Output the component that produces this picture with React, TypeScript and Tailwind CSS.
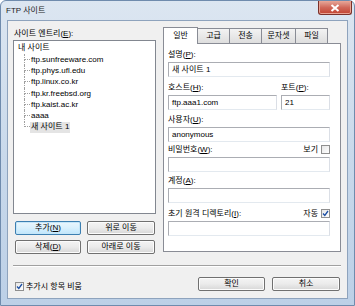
import React from 'react';

const U = ({ children }: { children: React.ReactNode }) => <span className="underline">{children}</span>;

const Btn = ({ children, def, className }: { children: React.ReactNode; def?: boolean; className?: string }) => (
    <div
        className={`h-[14px] flex items-center justify-center rounded-[2px] border text-[8px] leading-none ${
            def
                ? 'border-[#3c7fb1] bg-linear-to-b from-[#eaf6fd] via-[#d9f0fc] to-[#bee6fd] shadow-[inset_0_0_0_1px_#c5e6f8]'
                : 'border-[#707070] bg-linear-to-b from-[#f4f4f4] via-[#ebebeb] to-[#d6d6d6] shadow-[inset_0_0_0_1px_#fcfcfc]'
        } ${className ?? ''}`}
    >
        {children}
    </div>
);

const Check = ({ checked }: { checked?: boolean }) => (
    <span className="w-[9px] h-[9px] border border-[#8f8f8f] bg-linear-to-br from-[#e6e6e6] to-white flex items-center justify-center">
        {checked && (
            <svg width="7" height="7" viewBox="0 0 7 7">
                <path d="M1 3.5 L2.8 5.5 L6 1" stroke="#1c4fa4" strokeWidth="1.3" fill="none" />
            </svg>
        )}
    </span>
);

const Field = ({ value, className }: { value?: string; className?: string }) => (
    <div className={`h-[15px] border border-[#abadb3] border-b-[#e3e9ef] border-r-[#dbdfe6] bg-white px-[3px] flex items-center text-[8px] ${className ?? ''}`}>
        {value}
    </div>
);

const sites = [
    'ftp.sunfreeware.com',
    'ftp.phys.ufl.edu',
    'ftp.linux.co.kr',
    'ftp.kr.freebsd.org',
    'ftp.kaist.ac.kr',
    'aaaa',
    '새 사이트 1',
];

const App = () => {
    return (
        <div className="w-[355px] h-[306px] font-['Liberation_Sans','Noto_Sans_CJK_KR',sans-serif] text-black text-[8px]">
            <div className="w-full h-full flex flex-col rounded-t-[6px] border border-[#6f8bad] bg-linear-to-b from-[#dce6f1] via-[#c9d9eb] to-[#bcd0e7]">
                {/* title bar */}
                <div className="h-[19px] flex items-start shrink-0">
                    <span className="ml-[5px] mt-[4px] text-[8px] text-[#1b1b1b]">FTP 사이트</span>
                    <div className="ml-auto mr-[2px] w-[34px] h-[14px] rounded-b-[3px] border border-t-0 border-[#7a3029] bg-linear-to-b from-[#e5a89b] via-[#d0685a] to-[#c2422f] flex items-center justify-center shadow-[inset_0_0_0_1px_#e9a292]">
                        <svg width="10" height="8" viewBox="0 0 10 8">
                            <path d="M1.5 1 L8.5 7 M8.5 1 L1.5 7" stroke="#fff" strokeWidth="2" />
                        </svg>
                    </div>
                </div>

                {/* client area */}
                <div className="mx-[6px] h-[279px] border border-[#8ea3bd] bg-[#f0f0f0] flex flex-col pt-[6px] pl-[5px] pr-[6px]">
                    <div className="flex gap-[7px] h-[227px]">
                        {/* left column */}
                        <div className="w-[143px] flex flex-col">
                            <div className="h-[13px] flex items-center pl-[1px]">
                                사이트 엔트리(<U>E</U>):
                            </div>
                            <div className="h-[174px] border border-[#828790] bg-white pl-[4px] pt-[1px]">
                                <div className="h-[12px] flex items-center">내 사이트</div>
                                {sites.map((s, i) => {
                                    const last = i === sites.length - 1;
                                    return (
                                        <div key={s} className="h-[11.3px] flex ml-[6px]">
                                            <div className="w-[6px] flex flex-col">
                                                <div className="h-1/2 border-l border-b border-dotted border-[#a0a0a0]" />
                                                <div className={`h-1/2 ${last ? '' : 'border-l border-dotted border-[#a0a0a0]'}`} />
                                            </div>
                                            <span
                                                className={`flex items-center px-[1px] ${last ? 'bg-[#e4e4e4]' : ''}`}
                                            >
                                                {s}
                                            </span>
                                        </div>
                                    );
                                })}
                            </div>
                            <div className="mt-[7px] pl-[2px] pr-[1px] grid grid-cols-[66px_68px] gap-x-[6px] gap-y-[5px]">
                                <Btn def>추가(<U>N</U>)</Btn>
                                <Btn>위로 이동</Btn>
                                <Btn>삭제(<U>D</U>)</Btn>
                                <Btn>아래로 이동</Btn>
                            </div>
                        </div>

                        {/* right column */}
                        <div className="w-[178px] flex flex-col">
                            <div className="h-[16px] flex items-end">
                                <div className="relative z-10 -mb-[1px] w-[35px] h-[17px] border border-b-0 border-[#898c95] bg-white flex items-center justify-center">
                                    일반
                                </div>
                                {['고급', '전송', '문자셋', '파일'].map((t, i) => (
                                    <div
                                        key={t}
                                        className={`${i === 2 ? 'w-[35px]' : 'w-[33px]'} ${i === 0 ? '-ml-[1px]' : '-ml-[1px]'} h-[15px] border border-b-0 border-[#898c95] bg-linear-to-b from-[#f3f3f3] to-[#dedede] flex items-center justify-center`}
                                    >
                                        {t}
                                    </div>
                                ))}
                            </div>
                            <div className="h-[209px] border border-[#898c95] bg-white pt-[3px] pl-[4px] pr-[10px] flex flex-col">
                                <div className="h-[15px] flex items-center">설명(<U>P</U>):</div>
                                <Field value="새 사이트 1" />

                                <div className="mt-[3px] h-[15px] flex items-center">
                                    <span className="w-[113px]">호스트(<U>H</U>):</span>
                                    <span>포트(<U>P</U>):</span>
                                </div>
                                <div className="flex gap-[4px]">
                                    <Field value="ftp.aaa1.com" className="w-[109px]" />
                                    <Field value="21" className="flex-1" />
                                </div>

                                <div className="mt-[2px] h-[15px] flex items-center">사용자(<U>U</U>):</div>
                                <Field value="anonymous" />

                                <div className="h-[15px] flex items-center justify-between">
                                    <span>비밀번호(<U>W</U>):</span>
                                    <span className="flex items-center gap-[3px]">
                                        보기
                                        <Check />
                                    </span>
                                </div>
                                <Field />

                                <div className="mt-[1px] h-[15px] flex items-center">계정(<U>A</U>):</div>
                                <Field />

                                <div className="mt-[3px] h-[15px] flex items-center justify-between">
                                    <span>초기 원격 디렉토리(<U>I</U>):</span>
                                    <span className="flex items-center gap-[3px]">
                                        자동
                                        <Check checked />
                                    </span>
                                </div>
                                <Field />
                            </div>
                        </div>
                    </div>

                    <div className="mt-[11px] border-t border-b border-t-[#a0a0a0] border-b-white" />

                    <div className="flex justify-between">
                        <div className="mt-[15px] ml-[2px] flex items-center gap-[2px] h-[9px]">
                            <Check checked />
                            <span>추가시 항목 비움</span>
                        </div>
                        <div className="mt-[10px] mr-[1px] flex gap-[7px]">
                            <Btn className="w-[67px]">확인</Btn>
                            <Btn className="w-[68px]">취소</Btn>
                        </div>
                    </div>
                </div>
            </div>
        </div>
    );
};

export default App;
